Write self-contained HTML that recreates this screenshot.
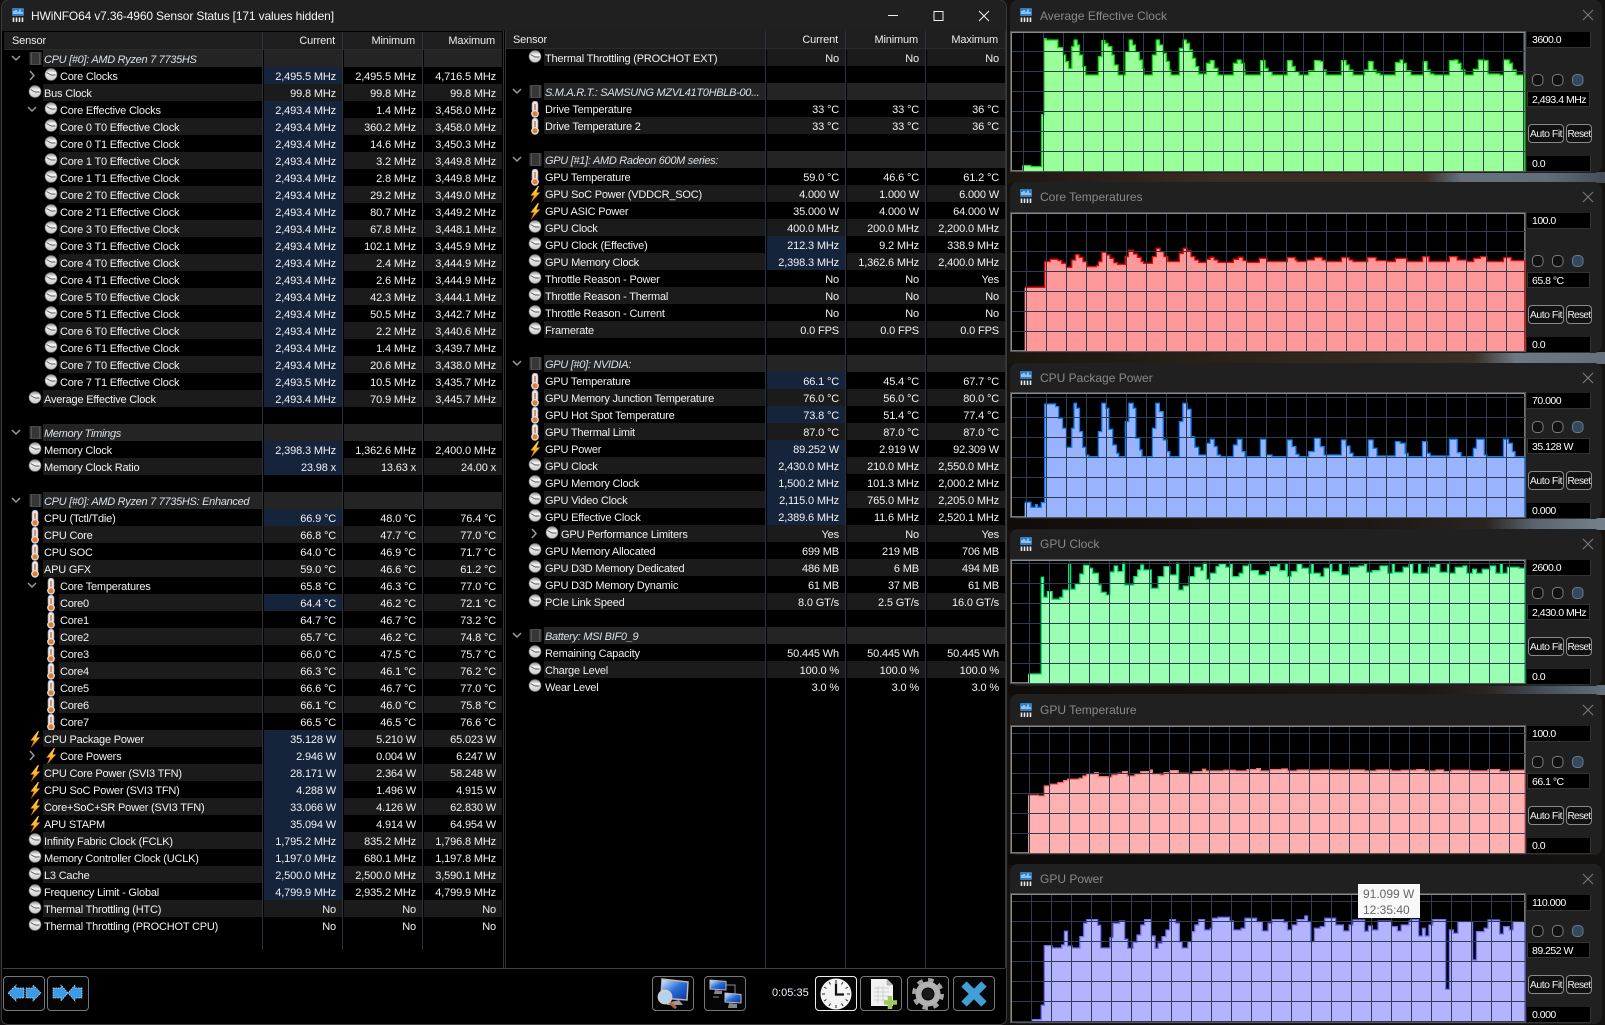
<!DOCTYPE html>
<html><head><meta charset="utf-8"><title>HWiNFO64</title>
<style>
html,body{margin:0;padding:0}
body{width:1605px;height:1025px;background:#15110e;overflow:hidden;position:relative;font:11px/17px "Liberation Sans",sans-serif;color:#f2f2f2;letter-spacing:-.15px}
.abs,.m,.hd,.p,.w,.gap,.ti,.cl,.bx,.ra,.bt,.pl,.tb,.sep,.app{position:absolute}
.m{left:2px;top:0;width:1004px;height:1024px;background:#000;border-radius:8px 8px 6px 6px;box-shadow:0 0 0 1px #3c3c3c}
.tbar{position:absolute;left:2px;top:0;width:1004px;height:31px;background:#202020;border-radius:8px 8px 0 0;font-size:12px;line-height:33px;letter-spacing:-.15px}
.tbar span{position:absolute;left:29px;top:0;white-space:nowrap;color:#f4f4f4}
.hd{top:32px;height:17px;background:#1e1e1e;line-height:16px;border-bottom:1px solid #2a2a2a}
.hd span{position:absolute;top:0;color:#ececec}
.sep{background:#2a3440;width:1px}
.hh{line-height:18px;color:#ececec}
.p{top:50px;left:0;width:503px}
.r{position:relative;height:17px;line-height:20px}
.r>b{font-weight:normal;position:absolute;left:43px;width:218px;padding-left:1px;height:17px;white-space:nowrap;overflow:hidden;letter-spacing:-.2px}
.r.d>b{left:59px;width:202px}
.r>u{text-decoration:none;position:absolute;width:72px;padding-right:6px;text-align:right;height:17px;top:0;white-space:nowrap}
.p1 u:nth-of-type(1){left:264px}.p1 u:nth-of-type(2){left:344px}.p1 u:nth-of-type(3){left:424px}
.p2{left:501px;top:49px}
.p2 .r>b{width:220px}.p2 .r.d>b{width:204px}
.p2 u:nth-of-type(1){left:266px}.p2 u:nth-of-type(2){left:346px}.p2 u:nth-of-type(3){left:426px}
.r:nth-child(odd)>b,.r:nth-child(odd)>u{background:#1b1b1b}
.r.h>u:nth-of-type(1){background:#15233b}
.r.g>b,.r.g>u{background:#242424}
.r.g>b{font-style:italic;color:#d9e0e8;letter-spacing:-.3px}
svg{display:block}
.r>svg{position:absolute;left:27px;top:1px}
.r.d>svg{left:43px}
.r>svg.v{left:11px;top:0}
.r.d>svg.v{left:27px}
.p2 .r>svg{left:26px}.p2 .r>svg.v{left:11px}.p2 .r.d>svg{left:43px}.p2 .r.d>svg.v{left:28px}
.tb{top:976px;width:40px;height:33px;border:1px solid #777;border-radius:4px;background:#050505}
.tb svg{position:absolute;left:0;top:0}
.w{left:1010px;width:592px;background:#202020;border-radius:8px}
.gap{left:1008px;width:597px}
.ti{left:1040px;height:18px;line-height:18px;font-size:12px;letter-spacing:0;color:#8a8a8a;white-space:nowrap}
.app{left:1019px;width:14px;height:14px}
.cl{left:1582px;width:12px;height:12px}
.bx{left:1527px;width:58px;height:15px;background:#000;border:1px solid #333;border-width:0 1px 1px 0;padding-left:5px;line-height:17px;color:#fff;font-size:10.5px;letter-spacing:-.5px;white-space:nowrap;overflow:hidden}
.bx.v{width:57px;border-width:1px;height:14px;line-height:16px;padding-left:4px}
.ra{left:1532px;width:56px;height:12px}
.bt{top:0;height:17px;border:1px solid #8a8a8a;border-radius:4px;background:#111;text-align:center;line-height:19px;color:#f0f0f0;font-size:10.5px;letter-spacing:-.5px;white-space:nowrap}
.bt.a{left:1528px;width:34px}
.bt.b{left:1566px;width:24px;font-size:10px;letter-spacing:-.6px}
.pl{left:1011px;width:514px;box-shadow:inset 0 0 0 1px #777;background:#000;outline:1px solid #555;outline-offset:0}
.tip{position:absolute;left:1358px;top:884px;width:62px;height:34px;background:#f8f8f8;color:#666;font-size:12px;line-height:16px;letter-spacing:0;padding:2px 0 0 5px;box-sizing:border-box;z-index:5;white-space:nowrap}
</style></head><body>

<svg width="0" height="0" style="position:absolute"><defs>
<linearGradient id="gk" x1="0" y1="0" x2="0" y2="1"><stop offset="0" stop-color="#8c8c8c"/><stop offset=".35" stop-color="#f4f4f4"/><stop offset="1" stop-color="#c8c8c8"/></linearGradient>
<linearGradient id="gb" x1="0" y1="0" x2="0" y2="1"><stop offset="0" stop-color="#ffec5a"/><stop offset="1" stop-color="#f08000"/></linearGradient>
<linearGradient id="gm" x1="0" y1="0" x2="1" y2="1"><stop offset="0" stop-color="#e8f2ff"/><stop offset=".5" stop-color="#2a6fd8"/><stop offset="1" stop-color="#0b2f9c"/></linearGradient>
<symbol id="k" viewBox="0 0 16 17"><circle cx="8" cy="6.500" r="6" fill="url(#gk)" stroke="#6a6a6a" stroke-width=".7"/><path d="M8 7H12.500M3.500 4.500L8 7" stroke="#5a5a5a" stroke-width="1" fill="none"/></symbol>
<symbol id="t" viewBox="0 0 16 17"><rect x="5" y="0" width="6" height="12" rx="3" fill="#e4eaf2" stroke="#8095b0" stroke-width=".7"/><path d="M8 3V13" stroke="#f0701a" stroke-width="1.500"/><circle cx="8" cy="12.800" r="3.200" fill="#ee7a20" stroke="#d4e0ee" stroke-width="1.400"/></symbol>
<symbol id="p" viewBox="0 0 16 17"><path d="M11 0L3.500 9.500H7L4 16.500L13 6.500H9.500L12 0Z" fill="url(#gb)" stroke="#a85a00" stroke-width=".4"/></symbol>
<symbol id="c" viewBox="0 0 16 17"><rect x="4" y="1" width="9" height="13" rx="1" fill="#4a4a4a"/><rect x="5" y="2" width="7" height="11" fill="#363636"/><path d="M3.500 1.500V14M13.500 1.500V14" stroke="#777" stroke-width="2" stroke-dasharray="1 1"/></symbol>
<symbol id="vd" viewBox="0 0 10 17"><path d="M1 6L5 10L9 6" stroke="#9a9a9a" stroke-width="1.500" fill="none"/></symbol>
<symbol id="vr" viewBox="0 0 10 17"><path d="M3 4L7 8.500L3 13" stroke="#9a9a9a" stroke-width="1.500" fill="none"/></symbol>
<symbol id="app" viewBox="0 0 14 14"><rect x="1" y="0" width="12" height="8" rx="1" fill="#2f7fc8"/><path d="M3 6V3M5 6V2M7 6V3.500M9 6V1.500M11 6V4" stroke="#fff" stroke-width="1"/><path d="M2.500 9.500V14M5.500 9.500V14M8.500 9.500V14M11.500 9.500V14" stroke="#e8e8e8" stroke-width="1.600"/></symbol>
<symbol id="x" viewBox="0 0 12 12"><path d="M1 1L11 11M11 1L1 11" stroke="#7a7a7a" stroke-width="1.100" fill="none"/></symbol>
<symbol id="rad" viewBox="0 0 56 12"><rect x=".5" y=".5" width="10.500" height="11" rx="4" fill="#111" stroke="#7a7a7a"/><rect x="20.500" y=".5" width="10.500" height="11" rx="4" fill="#111" stroke="#7a7a7a"/><rect x="40.500" y=".5" width="10.500" height="11" rx="4" fill="#34495e" stroke="#6a7a8a"/></symbol>
<pattern id="g1" x="12" y="19" width="20" height="20" patternUnits="userSpaceOnUse"><path d="M.5 0V20M0 .5H20" stroke="#2c3e50"/></pattern>
<pattern id="g2" x="15" y="18" width="20" height="20" patternUnits="userSpaceOnUse"><path d="M.5 0V20M0 .5H20" stroke="#2c3e50"/></pattern>
<pattern id="g3" x="15" y="4" width="20" height="20" patternUnits="userSpaceOnUse"><path d="M.5 0V20M0 .5H20" stroke="#2c3e50"/></pattern>
<pattern id="g4" x="18" y="3" width="20" height="20" patternUnits="userSpaceOnUse"><path d="M.5 0V20M0 .5H20" stroke="#2c3e50"/></pattern>
<pattern id="g5" x="18" y="7" width="20" height="20" patternUnits="userSpaceOnUse"><path d="M.5 0V20M0 .5H20" stroke="#2c3e50"/></pattern>
<pattern id="g6" x="0" y="7" width="20" height="20" patternUnits="userSpaceOnUse"><path d="M.5 0V20M0 .5H20" stroke="#2c3e50"/></pattern>
</defs></svg>

<div class="m"></div>
<div class="tbar"><svg class="abs" style="left:9px;top:8px" width="14" height="14"><use href="#app"/></svg><span>HWiNFO64 v7.36-4960 Sensor Status [171 values hidden]</span>
<svg class="abs" style="left:886px;top:10px" width="110" height="12"><path d="M0 5.500H10" stroke="#f0f0f0" stroke-width="1"/><path d="M46 1.500H55V10.500H46Z" stroke="#f0f0f0" fill="none" stroke-width="1"/><path d="M91 1L101 11M101 1L91 11" stroke="#f0f0f0" stroke-width="1" fill="none"/></svg></div>

<div class="hd" style="left:4px;width:498px"></div>
<div class="hd" style="left:505px;width:500px;top:31px"></div>
<div class="abs hh" style="left:12px;top:32px">Sensor</div>
<div class="abs hh" style="left:263px;top:32px;width:72px;text-align:right">Current</div>
<div class="abs hh" style="left:343px;top:32px;width:72px;text-align:right">Minimum</div>
<div class="abs hh" style="left:423px;top:32px;width:72px;text-align:right">Maximum</div>
<div class="abs hh" style="left:513px;top:31px">Sensor</div>
<div class="abs hh" style="left:766px;top:31px;width:72px;text-align:right">Current</div>
<div class="abs hh" style="left:846px;top:31px;width:72px;text-align:right">Minimum</div>
<div class="abs hh" style="left:926px;top:31px;width:72px;text-align:right">Maximum</div>

<div class="sep" style="left:262px;top:32px;height:918px"></div>
<div class="sep" style="left:342px;top:32px;height:918px"></div>
<div class="sep" style="left:422px;top:32px;height:918px"></div>
<div class="sep" style="left:765px;top:31px;height:937px"></div>
<div class="sep" style="left:845px;top:31px;height:937px"></div>
<div class="sep" style="left:925px;top:31px;height:937px"></div>
<div class="sep" style="left:503px;top:31px;height:937px;background:#333"></div>
<div class="sep" style="left:505px;top:31px;height:937px;background:#333"></div>
<div class="sep" style="left:1005px;top:31px;height:937px;background:#333"></div>
<div class="abs" style="left:3px;top:968px;width:1002px;height:1px;background:#3e3e3e"></div>

<div class="p p1">
<div class="r g"><svg class="v" width="10" height="17"><use href="#vd"/></svg><svg width="16" height="17"><use href="#c"/></svg><b>CPU [#0]: AMD Ryzen 7 7735HS</b><u></u><u></u><u></u></div>
<div class="r d h"><svg class="v" width="10" height="17"><use href="#vr"/></svg><svg width="16" height="17"><use href="#k"/></svg><b>Core Clocks</b><u>2,495.5 MHz</u><u>2,495.5 MHz</u><u>4,716.5 MHz</u></div>
<div class="r"><svg width="16" height="17"><use href="#k"/></svg><b>Bus Clock</b><u>99.8 MHz</u><u>99.8 MHz</u><u>99.8 MHz</u></div>
<div class="r d h"><svg class="v" width="10" height="17"><use href="#vd"/></svg><svg width="16" height="17"><use href="#k"/></svg><b>Core Effective Clocks</b><u>2,493.4 MHz</u><u>1.4 MHz</u><u>3,458.0 MHz</u></div>
<div class="r d h"><svg width="16" height="17"><use href="#k"/></svg><b>Core 0 T0 Effective Clock</b><u>2,493.4 MHz</u><u>360.2 MHz</u><u>3,458.0 MHz</u></div>
<div class="r d h"><svg width="16" height="17"><use href="#k"/></svg><b>Core 0 T1 Effective Clock</b><u>2,493.4 MHz</u><u>14.6 MHz</u><u>3,450.3 MHz</u></div>
<div class="r d h"><svg width="16" height="17"><use href="#k"/></svg><b>Core 1 T0 Effective Clock</b><u>2,493.4 MHz</u><u>3.2 MHz</u><u>3,449.8 MHz</u></div>
<div class="r d h"><svg width="16" height="17"><use href="#k"/></svg><b>Core 1 T1 Effective Clock</b><u>2,493.4 MHz</u><u>2.8 MHz</u><u>3,449.8 MHz</u></div>
<div class="r d h"><svg width="16" height="17"><use href="#k"/></svg><b>Core 2 T0 Effective Clock</b><u>2,493.4 MHz</u><u>29.2 MHz</u><u>3,449.0 MHz</u></div>
<div class="r d h"><svg width="16" height="17"><use href="#k"/></svg><b>Core 2 T1 Effective Clock</b><u>2,493.4 MHz</u><u>80.7 MHz</u><u>3,449.2 MHz</u></div>
<div class="r d h"><svg width="16" height="17"><use href="#k"/></svg><b>Core 3 T0 Effective Clock</b><u>2,493.4 MHz</u><u>67.8 MHz</u><u>3,448.1 MHz</u></div>
<div class="r d h"><svg width="16" height="17"><use href="#k"/></svg><b>Core 3 T1 Effective Clock</b><u>2,493.4 MHz</u><u>102.1 MHz</u><u>3,445.9 MHz</u></div>
<div class="r d h"><svg width="16" height="17"><use href="#k"/></svg><b>Core 4 T0 Effective Clock</b><u>2,493.4 MHz</u><u>2.4 MHz</u><u>3,444.9 MHz</u></div>
<div class="r d h"><svg width="16" height="17"><use href="#k"/></svg><b>Core 4 T1 Effective Clock</b><u>2,493.4 MHz</u><u>2.6 MHz</u><u>3,444.9 MHz</u></div>
<div class="r d h"><svg width="16" height="17"><use href="#k"/></svg><b>Core 5 T0 Effective Clock</b><u>2,493.4 MHz</u><u>42.3 MHz</u><u>3,444.1 MHz</u></div>
<div class="r d h"><svg width="16" height="17"><use href="#k"/></svg><b>Core 5 T1 Effective Clock</b><u>2,493.4 MHz</u><u>50.5 MHz</u><u>3,442.7 MHz</u></div>
<div class="r d h"><svg width="16" height="17"><use href="#k"/></svg><b>Core 6 T0 Effective Clock</b><u>2,493.4 MHz</u><u>2.2 MHz</u><u>3,440.6 MHz</u></div>
<div class="r d h"><svg width="16" height="17"><use href="#k"/></svg><b>Core 6 T1 Effective Clock</b><u>2,493.4 MHz</u><u>1.4 MHz</u><u>3,439.7 MHz</u></div>
<div class="r d h"><svg width="16" height="17"><use href="#k"/></svg><b>Core 7 T0 Effective Clock</b><u>2,493.4 MHz</u><u>20.6 MHz</u><u>3,438.0 MHz</u></div>
<div class="r d h"><svg width="16" height="17"><use href="#k"/></svg><b>Core 7 T1 Effective Clock</b><u>2,493.5 MHz</u><u>10.5 MHz</u><u>3,435.7 MHz</u></div>
<div class="r h"><svg width="16" height="17"><use href="#k"/></svg><b>Average Effective Clock</b><u>2,493.4 MHz</u><u>70.9 MHz</u><u>3,445.7 MHz</u></div>
<div class="r"></div>
<div class="r g"><svg class="v" width="10" height="17"><use href="#vd"/></svg><svg width="16" height="17"><use href="#c"/></svg><b>Memory Timings</b><u></u><u></u><u></u></div>
<div class="r h"><svg width="16" height="17"><use href="#k"/></svg><b>Memory Clock</b><u>2,398.3 MHz</u><u>1,362.6 MHz</u><u>2,400.0 MHz</u></div>
<div class="r h"><svg width="16" height="17"><use href="#k"/></svg><b>Memory Clock Ratio</b><u>23.98 x</u><u>13.63 x</u><u>24.00 x</u></div>
<div class="r"></div>
<div class="r g"><svg class="v" width="10" height="17"><use href="#vd"/></svg><svg width="16" height="17"><use href="#c"/></svg><b>CPU [#0]: AMD Ryzen 7 7735HS: Enhanced</b><u></u><u></u><u></u></div>
<div class="r h"><svg width="16" height="17"><use href="#t"/></svg><b>CPU (Tctl/Tdie)</b><u>66.9 °C</u><u>48.0 °C</u><u>76.4 °C</u></div>
<div class="r"><svg width="16" height="17"><use href="#t"/></svg><b>CPU Core</b><u>66.8 °C</u><u>47.7 °C</u><u>77.0 °C</u></div>
<div class="r"><svg width="16" height="17"><use href="#t"/></svg><b>CPU SOC</b><u>64.0 °C</u><u>46.9 °C</u><u>71.7 °C</u></div>
<div class="r"><svg width="16" height="17"><use href="#t"/></svg><b>APU GFX</b><u>59.0 °C</u><u>46.6 °C</u><u>61.2 °C</u></div>
<div class="r d"><svg class="v" width="10" height="17"><use href="#vd"/></svg><svg width="16" height="17"><use href="#t"/></svg><b>Core Temperatures</b><u>65.8 °C</u><u>46.3 °C</u><u>77.0 °C</u></div>
<div class="r d h"><svg width="16" height="17"><use href="#t"/></svg><b>Core0</b><u>64.4 °C</u><u>46.2 °C</u><u>72.1 °C</u></div>
<div class="r d"><svg width="16" height="17"><use href="#t"/></svg><b>Core1</b><u>64.7 °C</u><u>46.7 °C</u><u>73.2 °C</u></div>
<div class="r d"><svg width="16" height="17"><use href="#t"/></svg><b>Core2</b><u>65.7 °C</u><u>46.2 °C</u><u>74.8 °C</u></div>
<div class="r d"><svg width="16" height="17"><use href="#t"/></svg><b>Core3</b><u>66.0 °C</u><u>47.5 °C</u><u>75.7 °C</u></div>
<div class="r d"><svg width="16" height="17"><use href="#t"/></svg><b>Core4</b><u>66.3 °C</u><u>46.1 °C</u><u>76.2 °C</u></div>
<div class="r d"><svg width="16" height="17"><use href="#t"/></svg><b>Core5</b><u>66.6 °C</u><u>46.7 °C</u><u>77.0 °C</u></div>
<div class="r d"><svg width="16" height="17"><use href="#t"/></svg><b>Core6</b><u>66.1 °C</u><u>46.0 °C</u><u>75.8 °C</u></div>
<div class="r d"><svg width="16" height="17"><use href="#t"/></svg><b>Core7</b><u>66.5 °C</u><u>46.5 °C</u><u>76.6 °C</u></div>
<div class="r h"><svg width="16" height="17"><use href="#p"/></svg><b>CPU Package Power</b><u>35.128 W</u><u>5.210 W</u><u>65.023 W</u></div>
<div class="r d h"><svg class="v" width="10" height="17"><use href="#vr"/></svg><svg width="16" height="17"><use href="#p"/></svg><b>Core Powers</b><u>2.946 W</u><u>0.004 W</u><u>6.247 W</u></div>
<div class="r h"><svg width="16" height="17"><use href="#p"/></svg><b>CPU Core Power (SVI3 TFN)</b><u>28.171 W</u><u>2.364 W</u><u>58.248 W</u></div>
<div class="r h"><svg width="16" height="17"><use href="#p"/></svg><b>CPU SoC Power (SVI3 TFN)</b><u>4.288 W</u><u>1.496 W</u><u>4.915 W</u></div>
<div class="r h"><svg width="16" height="17"><use href="#p"/></svg><b>Core+SoC+SR Power (SVI3 TFN)</b><u>33.066 W</u><u>4.126 W</u><u>62.830 W</u></div>
<div class="r h"><svg width="16" height="17"><use href="#p"/></svg><b>APU STAPM</b><u>35.094 W</u><u>4.914 W</u><u>64.954 W</u></div>
<div class="r h"><svg width="16" height="17"><use href="#k"/></svg><b>Infinity Fabric Clock (FCLK)</b><u>1,795.2 MHz</u><u>835.2 MHz</u><u>1,796.8 MHz</u></div>
<div class="r h"><svg width="16" height="17"><use href="#k"/></svg><b>Memory Controller Clock (UCLK)</b><u>1,197.0 MHz</u><u>680.1 MHz</u><u>1,197.8 MHz</u></div>
<div class="r h"><svg width="16" height="17"><use href="#k"/></svg><b>L3 Cache</b><u>2,500.0 MHz</u><u>2,500.0 MHz</u><u>3,590.1 MHz</u></div>
<div class="r h"><svg width="16" height="17"><use href="#k"/></svg><b>Frequency Limit - Global</b><u>4,799.9 MHz</u><u>2,935.2 MHz</u><u>4,799.9 MHz</u></div>
<div class="r"><svg width="16" height="17"><use href="#k"/></svg><b>Thermal Throttling (HTC)</b><u>No</u><u>No</u><u>No</u></div>
<div class="r"><svg width="16" height="17"><use href="#k"/></svg><b>Thermal Throttling (PROCHOT CPU)</b><u>No</u><u>No</u><u>No</u></div>
</div>

<div class="p p2">
<div class="r"><svg width="16" height="17"><use href="#k"/></svg><b>Thermal Throttling (PROCHOT EXT)</b><u>No</u><u>No</u><u>No</u></div>
<div class="r"></div>
<div class="r g"><svg class="v" width="10" height="17"><use href="#vd"/></svg><svg width="16" height="17"><use href="#c"/></svg><b>S.M.A.R.T.: SAMSUNG MZVL41T0HBLB-00...</b><u></u><u></u><u></u></div>
<div class="r"><svg width="16" height="17"><use href="#t"/></svg><b>Drive Temperature</b><u>33 °C</u><u>33 °C</u><u>36 °C</u></div>
<div class="r"><svg width="16" height="17"><use href="#t"/></svg><b>Drive Temperature 2</b><u>33 °C</u><u>33 °C</u><u>36 °C</u></div>
<div class="r"></div>
<div class="r g"><svg class="v" width="10" height="17"><use href="#vd"/></svg><svg width="16" height="17"><use href="#c"/></svg><b>GPU [#1]: AMD Radeon 600M series:</b><u></u><u></u><u></u></div>
<div class="r"><svg width="16" height="17"><use href="#t"/></svg><b>GPU Temperature</b><u>59.0 °C</u><u>46.6 °C</u><u>61.2 °C</u></div>
<div class="r"><svg width="16" height="17"><use href="#p"/></svg><b>GPU SoC Power (VDDCR_SOC)</b><u>4.000 W</u><u>1.000 W</u><u>6.000 W</u></div>
<div class="r"><svg width="16" height="17"><use href="#p"/></svg><b>GPU ASIC Power</b><u>35.000 W</u><u>4.000 W</u><u>64.000 W</u></div>
<div class="r"><svg width="16" height="17"><use href="#k"/></svg><b>GPU Clock</b><u>400.0 MHz</u><u>200.0 MHz</u><u>2,200.0 MHz</u></div>
<div class="r h"><svg width="16" height="17"><use href="#k"/></svg><b>GPU Clock (Effective)</b><u>212.3 MHz</u><u>9.2 MHz</u><u>338.9 MHz</u></div>
<div class="r h"><svg width="16" height="17"><use href="#k"/></svg><b>GPU Memory Clock</b><u>2,398.3 MHz</u><u>1,362.6 MHz</u><u>2,400.0 MHz</u></div>
<div class="r"><svg width="16" height="17"><use href="#k"/></svg><b>Throttle Reason - Power</b><u>No</u><u>No</u><u>Yes</u></div>
<div class="r"><svg width="16" height="17"><use href="#k"/></svg><b>Throttle Reason - Thermal</b><u>No</u><u>No</u><u>No</u></div>
<div class="r"><svg width="16" height="17"><use href="#k"/></svg><b>Throttle Reason - Current</b><u>No</u><u>No</u><u>No</u></div>
<div class="r"><svg width="16" height="17"><use href="#k"/></svg><b>Framerate</b><u>0.0 FPS</u><u>0.0 FPS</u><u>0.0 FPS</u></div>
<div class="r"></div>
<div class="r g"><svg class="v" width="10" height="17"><use href="#vd"/></svg><svg width="16" height="17"><use href="#c"/></svg><b>GPU [#0]: NVIDIA:</b><u></u><u></u><u></u></div>
<div class="r h"><svg width="16" height="17"><use href="#t"/></svg><b>GPU Temperature</b><u>66.1 °C</u><u>45.4 °C</u><u>67.7 °C</u></div>
<div class="r"><svg width="16" height="17"><use href="#t"/></svg><b>GPU Memory Junction Temperature</b><u>76.0 °C</u><u>56.0 °C</u><u>80.0 °C</u></div>
<div class="r h"><svg width="16" height="17"><use href="#t"/></svg><b>GPU Hot Spot Temperature</b><u>73.8 °C</u><u>51.4 °C</u><u>77.4 °C</u></div>
<div class="r"><svg width="16" height="17"><use href="#t"/></svg><b>GPU Thermal Limit</b><u>87.0 °C</u><u>87.0 °C</u><u>87.0 °C</u></div>
<div class="r h"><svg width="16" height="17"><use href="#p"/></svg><b>GPU Power</b><u>89.252 W</u><u>2.919 W</u><u>92.309 W</u></div>
<div class="r h"><svg width="16" height="17"><use href="#k"/></svg><b>GPU Clock</b><u>2,430.0 MHz</u><u>210.0 MHz</u><u>2,550.0 MHz</u></div>
<div class="r h"><svg width="16" height="17"><use href="#k"/></svg><b>GPU Memory Clock</b><u>1,500.2 MHz</u><u>101.3 MHz</u><u>2,000.2 MHz</u></div>
<div class="r h"><svg width="16" height="17"><use href="#k"/></svg><b>GPU Video Clock</b><u>2,115.0 MHz</u><u>765.0 MHz</u><u>2,205.0 MHz</u></div>
<div class="r h"><svg width="16" height="17"><use href="#k"/></svg><b>GPU Effective Clock</b><u>2,389.6 MHz</u><u>11.6 MHz</u><u>2,520.1 MHz</u></div>
<div class="r d"><svg class="v" width="10" height="17"><use href="#vr"/></svg><svg width="16" height="17"><use href="#k"/></svg><b>GPU Performance Limiters</b><u>Yes</u><u>No</u><u>Yes</u></div>
<div class="r"><svg width="16" height="17"><use href="#k"/></svg><b>GPU Memory Allocated</b><u>699 MB</u><u>219 MB</u><u>706 MB</u></div>
<div class="r"><svg width="16" height="17"><use href="#k"/></svg><b>GPU D3D Memory Dedicated</b><u>486 MB</u><u>6 MB</u><u>494 MB</u></div>
<div class="r"><svg width="16" height="17"><use href="#k"/></svg><b>GPU D3D Memory Dynamic</b><u>61 MB</u><u>37 MB</u><u>61 MB</u></div>
<div class="r"><svg width="16" height="17"><use href="#k"/></svg><b>PCIe Link Speed</b><u>8.0 GT/s</u><u>2.5 GT/s</u><u>16.0 GT/s</u></div>
<div class="r"></div>
<div class="r g"><svg class="v" width="10" height="17"><use href="#vd"/></svg><svg width="16" height="17"><use href="#c"/></svg><b>Battery: MSI BIF0_9</b><u></u><u></u><u></u></div>
<div class="r"><svg width="16" height="17"><use href="#k"/></svg><b>Remaining Capacity</b><u>50.445 Wh</u><u>50.445 Wh</u><u>50.445 Wh</u></div>
<div class="r"><svg width="16" height="17"><use href="#k"/></svg><b>Charge Level</b><u>100.0 %</u><u>100.0 %</u><u>100.0 %</u></div>
<div class="r"><svg width="16" height="17"><use href="#k"/></svg><b>Wear Level</b><u>3.0 %</u><u>3.0 %</u><u>3.0 %</u></div>
</div>

<!-- bottom toolbar -->
<div class="tb" style="left:3px"><svg width="40" height="33"><path d="M20 11L12 11V8L4 16L12 24V21H20Z" fill="#3b9be6" stroke="#cfe6fa" stroke-width=".7" stroke-dasharray="1.500 1"/><path d="M22 11H29V8L37 16L29 24V21H22Z" fill="#3b9be6" stroke="#cfe6fa" stroke-width=".7" stroke-dasharray="1.500 1"/></svg></div>
<div class="tb" style="left:47px"><svg width="40" height="33"><path d="M5 11H13V8L20 16L13 24V21H5Z" fill="#3b9be6" stroke="#cfe6fa" stroke-width=".7" stroke-dasharray="1.500 1"/><path d="M34 11H27V8L20 16L27 24V21H34Z" fill="#3b9be6" stroke="#cfe6fa" stroke-width=".7" stroke-dasharray="1.500 1"/></svg></div>
<div class="tb" style="left:652px"><svg width="40" height="33"><path d="M9 2L35 5L34 23L8 21Z" fill="url(#gm)" stroke="#bbb" stroke-width="1.500"/><path d="M26 23L30 28H14V26Z" fill="#9a9a9a"/><path d="M16 25L23 31" stroke="#b8673a" stroke-width="3"/><circle cx="12" cy="20" r="6.500" fill="#b6d2ee" stroke="#d0d0d0" stroke-width="1.800"/></svg></div>
<div class="tb" style="left:704px"><svg width="40" height="33"><path d="M20 8H30V17M14 20H8" stroke="#8a8a8a" fill="none"/><path d="M5 3L21 4.500V13L5 12Z" fill="url(#gm)" stroke="#bbb"/><path d="M10 13L17 14V17H9Z" fill="#888"/><path d="M20 16L36 17.500V26L20 25Z" fill="url(#gm)" stroke="#bbb"/><path d="M24 26L32 27V31H23Z" fill="#888"/></svg></div>
<div class="abs" style="left:772px;top:985px;color:#eaf4ff;letter-spacing:0;line-height:16px">0:05:35</div>
<div class="tb" style="left:815px;border-color:#eee"><svg width="40" height="33"><circle cx="20" cy="17" r="15.500" fill="#f4f4f4"/><path d="M20 3V6M20 28V31M6 17H9M31 17H34M13 5L14.500 7.500M27 5L25.500 7.500M8 10L10.500 11.500M32 10L29.500 11.500M8 24L10.500 22.500M32 24L29.500 22.500M13 29L14.500 26.500M27 29L25.500 26.500" stroke="#222" stroke-width="1"/><path d="M20 6.500V17.500H28" stroke="#111" stroke-width="2.200" fill="none"/></svg></div>
<div class="tb" style="left:860px"><svg width="40" height="33"><path d="M10 2H26L32 8V29H10Z" fill="#f2f2f2"/><path d="M26 2V8H32" fill="#bbb" stroke="#999" stroke-width=".5"/><path d="M13 11H28M13 15H28M13 19H28M13 23H25M17 9V26M22 9V26" stroke="#c4ccc4" stroke-width=".8"/><path d="M29 19V32M23 25.500H36" stroke="#9fc958" stroke-width="4.500"/></svg></div>
<div class="tb" style="left:907px"><svg width="40" height="33"><circle cx="20" cy="17" r="9.500" fill="none" stroke="#b2b2b2" stroke-width="6"/><circle cx="20" cy="17" r="14" fill="none" stroke="#a4a4a4" stroke-width="4" stroke-dasharray="5.500 5.500"/><circle cx="20" cy="17" r="5.500" fill="#1a1a1a"/></svg></div>
<div class="tb" style="left:953px"><svg width="40" height="33"><path d="M10 7L30 27M30 7L10 27" stroke="#3f9fd6" stroke-width="7.500"/></svg></div>

<!-- gaps / wallpaper -->
<div class="gap" style="top:172px;height:11px;background:linear-gradient(90deg,#1d1712 0,#3a2d22 35%,#3a2f26 70%,#66717c 76%,#626e7a 90%,#454e58 100%)"></div>
<div class="gap" style="top:352px;height:12px;background:linear-gradient(90deg,#1a1510 0,#2c231b 40%,#3a3027 78%,#6c7884 85%,#64707c 100%)"></div>
<div class="gap" style="top:518px;height:12px;background:linear-gradient(90deg,#100c0a 0,#1e1814 60%,#2a241f 80%,#58636e 88%,#75828e 100%)"></div>
<div class="gap" style="top:685px;height:10px;background:linear-gradient(90deg,#100c0a 0,#1c1714 70%,#2a2521 80%,#46505a 90%,#64707c 100%)"></div>
<div class="gap" style="top:854px;height:11px;background:linear-gradient(90deg,#0d0b0a 0,#141210 100%)"></div>

<!-- Window 1 -->
<div class="w" style="top:0;height:173px"></div>
<svg class="app" style="top:8px"><use href="#app"/></svg><div class="ti" style="top:7px">Average Effective Clock</div><svg class="cl" style="top:9px"><use href="#x"/></svg>
<div class="bx" style="top:32px">3600.0</div><svg class="ra" style="top:74px"><use href="#rad"/></svg><div class="bx v" style="top:91px">2,493.4 MHz</div>
<div class="bt a" style="top:124px">Auto Fit</div><div class="bt b" style="top:124px">Reset</div><div class="bx" style="top:156px">0.0</div>
<svg class="pl" style="top:32px" width="514" height="139"><g transform="translate(-11,-32) scale(.3858,.3333)"><path vector-effect="non-scaling-stroke" fill="#99ff99" stroke="#00e600" stroke-width="1.300" d="M60 497H80V500H108V344H114V116H120V120H150V143H164V165H170V185H178V205H186V140H192V120H200V135H206V165H214V200H222V225H255V170H264V122H272V130H280V140H290V165H296V195H306V225H325V155H335V120H343V135H351V155H361V180H369V205H373V225H395V165H405V120H413V135H423V160H431V185H439V210H443V225H465V145H475V120H483V130H491V150H499V175H507V200H515V222H535V190H545V182H555V205H565V225H605V190H615V180H625V190H633V210H635V225H675V182H687V205H695V215H705V225H745V182H757V200H765V215H775V225H800V212H815V182H830V185H838V210H845V225H885V182H897V195H905V210H915V225H945V210H955V185H967V210H975V220H985V225H1025V188H1037V180H1045V190H1053V212H1065V225H1097V185H1107V210H1115V222H1125V225H1165V182H1177V180H1187V190H1195V210H1205V225H1227V208H1240V180H1255V182H1265V222H1295V225H1305V180H1320V190H1328V210H1338V225H1360V530H60Z"/><rect x="58" y="497" width="5" height="30" fill="#99ff99"/></g><rect width="514" height="139" fill="url(#g1)"/><path d="M.5 139V.5H514" stroke="#8a8a8a" fill="none"/></svg>

<!-- Window 2 -->
<div class="w" style="top:182px;height:171px"></div>
<svg class="app" style="top:189px"><use href="#app"/></svg><div class="ti" style="top:188px">Core Temperatures</div><svg class="cl" style="top:191px"><use href="#x"/></svg>
<div class="bx" style="top:213px">100.0</div><svg class="ra" style="top:255px"><use href="#rad"/></svg><div class="bx v" style="top:272px">65.8 °C</div>
<div class="bt a" style="top:305px">Auto Fit</div><div class="bt b" style="top:305px">Reset</div><div class="bx" style="top:337px">0.0</div>
<svg class="pl" style="top:213px" width="514" height="138"><g transform="translate(-11,-213) scale(.3858,.3333)"><path vector-effect="non-scaling-stroke" fill="#ff9999" stroke="#ff0000" stroke-width="1.300" d="M66 862H116V785H130V778H150V782H160V790H172V802H186V780H196V764H205V772H215V785H225V800H250V797H255V785H264V757H276V765H285V775H295V788H305V793H325V770H333V751H346V762H356V772H366V785H372V790H395V770H405V745H415V755H425V770H435V785H465V760H475V745H485V752H495V770H505V780H515V787H535V778H545V772H555V780H565V787H605V778H618V772H630V782H640V787H672V775H692V785H745V773H765V780H770V785H795V780H815V773H835V780H845V785H885V773H905V780H915V785H953V773H975V782H1003V785H1025V775H1045V775H1055V785H1095V770H1112V785H1165V770H1185V780H1210V785H1228V775H1245V770H1262V785H1305V773H1325V782H1360V1080H66Z"/><rect x="64" y="864" width="5" height="200" fill="#ff9999"/></g><rect width="514" height="138" fill="url(#g2)"/><path d="M.5 138V.5H514" stroke="#8a8a8a" fill="none"/></svg>

<!-- Window 3 -->
<div class="w" style="top:363px;height:156px"></div>
<svg class="app" style="top:371px"><use href="#app"/></svg><div class="ti" style="top:369px">CPU Package Power</div><svg class="cl" style="top:372px"><use href="#x"/></svg>
<div class="bx" style="top:393px">70.000</div><svg class="ra" style="top:421px"><use href="#rad"/></svg><div class="bx v" style="top:438px">35.128 W</div>
<div class="bt a" style="top:471px">Auto Fit</div><div class="bt b" style="top:471px">Reset</div><div class="bx" style="top:503px">0.000</div>
<svg class="pl" style="top:393px" width="514" height="124"><g transform="translate(-11,-33) scale(.3858,.3333)"><path vector-effect="non-scaling-stroke" fill="#99b3ff" stroke="#0a84ff" stroke-width="1.300" d="M66 427H80V442H92V434H97V442H107V428H116V132H144V140H152V175H162V205H172V262H186V205H192V130H198V145H206V215H214V262H222V285H230V290H255V215H264V130H274V145H282V208H292V255H302V280H308V290H325V185H334V130H345V145H352V235H362V270H368V290H395V205H404V130H413V155H423V240H433V275H440V290H465V185H474V130H485V148H495V230H505V262H515V285H535V250H545V238H555V260H563V285H572V290H605V255H615V238H627V275H635V290H675V238H690V285H705V290H745V240H757V260H767V283H775V290H800V275H815V235H830V260H840V285H885V240H897V258H907V280H915V290H955V240H967V265H977V288H1025V245H1037V250H1050V280H1058V290H1095V245H1107V280H1115V288H1165V238H1185V278H1195V290H1227V265H1235V238H1255V285H1262V290H1305V238H1318V250H1328V275H1335V290H1360V500H66Z"/><rect x="64" y="429" width="5" height="60" fill="#99b3ff"/></g><rect width="514" height="124" fill="url(#g3)"/><path d="M.5 124V.5H514" stroke="#8a8a8a" fill="none"/></svg>

<!-- Window 4 -->
<div class="w" style="top:529px;height:157px"></div>
<svg class="app" style="top:537px"><use href="#app"/></svg><div class="ti" style="top:535px">GPU Clock</div><svg class="cl" style="top:538px"><use href="#x"/></svg>
<div class="bx" style="top:560px">2600.0</div><svg class="ra" style="top:587px"><use href="#rad"/></svg><div class="bx v" style="top:604px">2,430.0 MHz</div>
<div class="bt a" style="top:637px">Auto Fit</div><div class="bt b" style="top:637px">Reset</div><div class="bx" style="top:669px">0.0</div>
<svg class="pl" style="top:560px" width="514" height="123"><g transform="translate(-11,-200) scale(.3858,.3333)"><path vector-effect="non-scaling-stroke" fill="#99ffb3" stroke="#00e673" stroke-width="1.300" d="M75 942H107V652H113V712H123V695H135V718H155V712H163V690H178V612H183V688H195V672H207V642H217V616H232V625H240V640H255V675H262V697H275V705H285V636H296V618H305V635H318V610H323V675H347V650H357V630H365V615H372V630H392V685H410V650H425V620H440V645H458V610H463V690H475V678H490V650H505V622H520V632H527V610H535V658H545V640H560V620H568V612H585V622H597V612H602V650H620V640H630V618H645V612H650V632H670V645H690V635H700V620H720V612H725V632H740V612H745V650H755V635H770V612H782V625H800V640H807V612H812V640H830V650H840V625H855V612H860V635H880V612H885V645H905V622H930V618H945V612H950V637H965V632H985V618H1005V640H1017V612H1022V637H1045V622H1060V612H1070V640H1085V612H1090V640H1110V622H1130V612H1140V637H1160V612H1165V640H1180V622H1200V618H1210V640H1225V628H1235V640H1250V628H1270V618H1285V640H1297V612H1302V640H1315V622H1345V625H1360V1000H75Z"/><rect x="73" y="944" width="5" height="50" fill="#99ffb3"/></g><rect width="514" height="123" fill="url(#g4)"/><path d="M.5 123V.5H514" stroke="#8a8a8a" fill="none"/></svg>

<!-- Window 5 -->
<div class="w" style="top:694px;height:161px"></div>
<svg class="app" style="top:703px"><use href="#app"/></svg><div class="ti" style="top:701px">GPU Temperature</div><svg class="cl" style="top:704px"><use href="#x"/></svg>
<div class="bx" style="top:726px">100.0</div><svg class="ra" style="top:756px"><use href="#rad"/></svg><div class="bx v" style="top:773px">66.1 °C</div>
<div class="bt a" style="top:806px">Auto Fit</div><div class="bt b" style="top:806px">Reset</div><div class="bx" style="top:838px">0.0</div>
<svg class="pl" style="top:726px" width="514" height="127"><g transform="translate(-11,-36) scale(.3858,.3333)"><path vector-effect="non-scaling-stroke" fill="#ffb0b0" stroke="#ff7070" stroke-width="1.300" d="M75 316H100V318H115V288H130V283H150V278H165V272H175V268H190V268H205V265H215V258H225V252H245V248H255V260H280V262H290V255H305V250H318V245H330V258H350V252H365V245H390V240H395V252H415V255H425V248H440V242H462V250H490V252H500V245H525V238H533V243H580V241H610V243H640V239H665V236H675V243H700V239H730V237H745V243H770V240H800V241H830V240H860V241H900V240H945V243H975V240H1015V243H1040V241H1080V239H1100V243H1130V240H1150V245H1170V241H1220V243H1265V239H1295V245H1320V241H1360V520H75Z"/><rect x="73" y="318" width="5" height="190" fill="#ffb0b0"/></g><rect width="514" height="127" fill="url(#g5)"/><path d="M.5 127V.5H514" stroke="#8a8a8a" fill="none"/></svg>

<!-- Window 6 -->
<div class="w" style="top:864px;height:160px"></div>
<svg class="app" style="top:872px"><use href="#app"/></svg><div class="ti" style="top:870px">GPU Power</div><svg class="cl" style="top:873px"><use href="#x"/></svg>
<div class="bx" style="top:895px">110.000</div><svg class="ra" style="top:925px"><use href="#rad"/></svg><div class="bx v" style="top:942px">89.252 W</div>
<div class="bt a" style="top:975px">Auto Fit</div><div class="bt b" style="top:975px">Reset</div><div class="bx" style="top:1007px">0.000</div>
<svg class="pl" style="top:894px" width="514" height="128"><g transform="translate(-11,-34) scale(.3858,.3333)"><path vector-effect="non-scaling-stroke" fill="#b3b3ff" stroke="#7070ff" stroke-width="1.300" d="M83 479H107V436H115V257H135V264H160V255H167V214H175V258H187V264H207V230H217V190H225V179H253V196H261V264H285V233H293V190H310V183H323V238H331V265H345V247H355V225H365V195H375V179H392V228H402V265H410V250H420V230H430V210H440V179H455V190H465V245H472V264H487V245H497V215H505V195H515V179H530V210H545V205H550V175H565V172H595V183H605V210H625V205H635V175H665V185H680V213H695V190H705V179H735V188H745V210H757V195H770V179H790V168H797V185H805V245H815V205H830V200H842V175H870V195H890V213H905V195H915V180H945V214H955V198H965V210H980V183H1015V200H1030V213H1040V195H1060V183H1065V179H1085V228H1095V205H1102V228H1112V195H1122V179H1155V388H1165V210H1175V220H1187V185H1225V300H1235V215H1255V205H1265V180H1295V222H1305V200H1320V210H1330V185H1360V520H83Z"/></g><rect width="514" height="128" fill="url(#g6)"/><path d="M.5 128V.5H514" stroke="#8a8a8a" fill="none"/></svg>
<div class="tip">91.099 W<br>12:35:40</div>
</body></html>
